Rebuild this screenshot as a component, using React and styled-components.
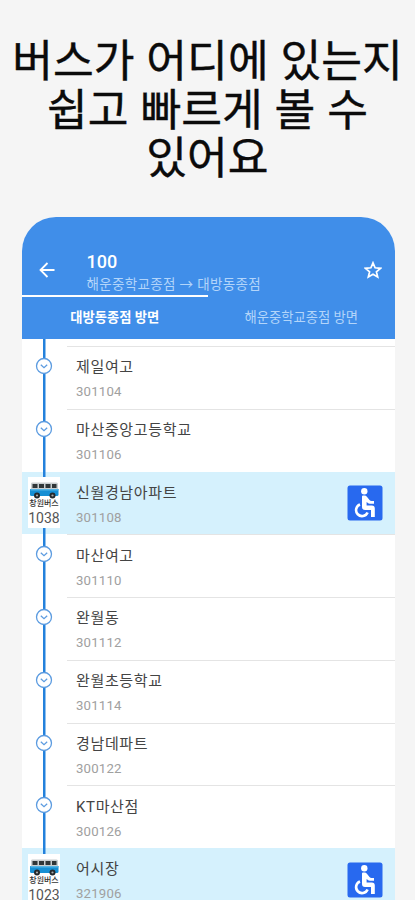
import React from 'react'
import styled, { createGlobalStyle } from "styled-components";

const stops = [
  { name: "제일여고", code: "301104" },
  { name: "마산중앙고등학교", code: "301106" },
  { name: "신월경남아파트", code: "301108", bus: "1038" },
  { name: "마산여고", code: "301110" },
  { name: "완월동", code: "301112" },
  { name: "완월초등학교", code: "301114" },
  { name: "경남데파트", code: "300122" },
  { name: "KT마산점", code: "300126" },
  { name: "어시장", code: "321906", bus: "1023" },
];

const BusPicture = () => (
  <svg width="31" height="18" viewBox="0 0 31 18">
    <path d="M3 1.500h24.500q1.500 0 1.500 1.500V8H2V3q0-1.500 1-1.500z" fill="#c9ced0" />
    <path d="M3.500 3h5v4h-5zM10 3h5v4h-5zM16.500 3h5v4h-5zM23 3h4.500v4H23z" fill="#303638" />
    <path d="M1 8h28.500v5.500q0 1.500-1.500 1.500H2.500Q1 15 1 13.500z" fill="#168fd4" />
    <path d="M1.500 8h28v1.500h-28z" fill="#55b4e5" />
    <circle cx="8" cy="14.500" r="3" fill="#25292b" />
    <circle cx="23.500" cy="14.500" r="3" fill="#25292b" />
    <circle cx="8" cy="14.500" r="1.100" fill="#aaa" />
    <circle cx="23.500" cy="14.500" r="1.100" fill="#aaa" />
  </svg>
);

const Wheelchair = () => (
  <svg width="36" height="36" viewBox="0 0 36 36">
    <rect x="0.500" y="0.500" width="35" height="35" rx="2.500" fill="#2869ef" />
    <circle cx="17.300" cy="6.300" r="3.200" fill="#fff" />
    <path d="M15 11.500q0-1 1-1h1.500q1.500 0 2.400 1.200l2.600 3.300q.8.900 2 .9h2.500v2.800h-4q-1.500 0-2.400-.9L19.600 17v3.500h5.200q3 0 3 3v8.500h-3.800v-7H18q-3 0-3-3z" fill="#fff" />
    <path d="M13 19.500a6 6 0 1 0 7.600 8" fill="none" stroke="#fff" strokeWidth="2.600" />
  </svg>
);

export default function App() {
  return (
    <Page>
      <GlobalStyle />
      <Title>버스가 어디에 있는지<br />쉽고 빠르게 볼 수<br />있어요</Title>
      <Phone>
        <Header>
          <TopBar>
            <svg width="16" height="16" viewBox="0 0 16 16" fill="none" stroke="#fff" strokeWidth="1.800">
              <path d="M15.500 8H2M8.500 1L1.500 8l7 7" />
            </svg>
            <Route>
              <RouteNumber>100</RouteNumber>
              <RoutePath>해운중학교종점 → 대방동종점</RoutePath>
            </Route>
            <svg width="18" height="18" viewBox="0 0 18 18" fill="none" stroke="#fff" strokeWidth="1.700">
              <path d="M9 1.800l2.100 5 5.400.5-4.100 3.500 1.300 5.300L9 13.300l-4.700 2.800 1.300-5.300L1.500 7.300l5.400-.5z" />
            </svg>
          </TopBar>
          <Indicator />
          <Tabs>
            <Tab $active>대방동종점 방면</Tab>
            <Tab>해운중학교종점 방면</Tab>
          </Tabs>
        </Header>
        <List>
          <Gap><Track /></Gap>
          {stops.map((stop) => (
            <Row key={stop.code} $active={stop.bus}>
              <Track>
                {stop.bus ? (
                  <BusTag>
                    <BusPicture />
                    <BusLabel>창원버스</BusLabel>
                    <BusNumber>{stop.bus}</BusNumber>
                  </BusTag>
                ) : (
                  <StopMark width="18" height="18" viewBox="0 0 18 18" fill="none">
                    <circle cx="9" cy="9" r="7.500" fill="#fff" stroke="#5b9be0" strokeWidth="1.300" />
                    <path d="M5.800 7.800L9 10.800l3.200-3" stroke="#5b9be0" strokeWidth="1.200" />
                  </StopMark>
                )}
              </Track>
              <Stop $active={stop.bus}>
                <div>
                  <StopName>{stop.name}</StopName>
                  <StopCode>{stop.code}</StopCode>
                </div>
                {stop.bus && <Wheelchair />}
              </Stop>
            </Row>
          ))}
        </List>
      </Phone>
    </Page>
  );
}

const GlobalStyle = createGlobalStyle`
  body {
    margin: 0;
    background: #f5f5f5;
  }
  * {
    box-sizing: border-box;
  }
`;
const Page = styled.main`
  width: 415px;
  height: 900px;
  padding-top: 34px;
  overflow: hidden;
  background: #f5f5f5;
  font-family: Roboto, "Noto Sans CJK KR", sans-serif;
`;
const Title = styled.h1`
  height: 147px;
  margin: 0;
  font-family: "Noto Sans CJK KR", sans-serif;
  font-size: 44.3px;
  font-weight: 400;
  line-height: 48.700px;
  word-spacing: 2px;
  text-align: center;
  white-space: nowrap;
  color: #0b0b0b;
  -webkit-text-stroke: 0.4px #0b0b0b;
`;
const Phone = styled.section`
  width: 373px;
  margin: 35.500px 0 0 21.500px;
  border-radius: 34px 34px 0 0;
  overflow: hidden;
  background: white;
`;
const Header = styled.header`
  height: 122px;
  background: #408ee9;
`;
const TopBar = styled.div`
  display: flex;
  align-items: center;
  height: 78px;
  padding: 28px 13px 0 17px;
`;
const Route = styled.div`
  flex: 1;
  margin-left: 32px;
  padding-top: 5px;
`;
const RouteNumber = styled.div`
  height: 23px;
  font-size: 18px;
  font-weight: 500;
  line-height: 23px;
  color: white;
`;
const RoutePath = styled.div`
  height: 22px;
  font-size: 13.5px;
  letter-spacing: 0.35px;
  line-height: 22px;
  white-space: nowrap;
  color: #b3d5fa;
`;
const Indicator = styled.div`
  width: 186.500px;
  height: 2.500px;
  background: white;
`;
const Tabs = styled.nav`
  display: flex;
  height: 41px;
`;
const Tab = styled.div`
  flex: 1;
  font-size: 13.3px;
  font-weight: ${(props) => (props.$active ? 700 : 400)};
  line-height: 42px;
  text-align: center;
  color: ${(props) => (props.$active ? "white" : "#b3d5fa")};
`;
const List = styled.div`
  display: flex;
  flex-direction: column;
`;
const Gap = styled.div`
  display: flex;
  height: 7.500px;
`;
const Row = styled.div`
  display: flex;
  height: 62.750px;
  background: ${(props) => (props.$active ? "#d5f1fd" : "white")};
`;
const Track = styled.div`
  display: flex;
  flex-direction: column;
  align-items: center;
  width: 45px;
  background: linear-gradient(#2381dc, #2381dc) 21px 0 / 2.500px 100% no-repeat;
`;
const StopMark = styled.svg`
  margin-top: 11px;
`;
const BusTag = styled.div`
  display: flex;
  flex-direction: column;
  align-items: center;
  width: 32px;
  height: 51px;
  margin-top: 5.500px;
  padding-top: 4px;
  background: white;
`;
const BusLabel = styled.div`
  height: 10px;
  font-size: 8px;
  font-weight: 500;
  line-height: 10px;
  white-space: nowrap;
  color: #333;
`;
const BusNumber = styled.div`
  margin-top: 1px;
  font-size: 14px;
  line-height: 17px;
  color: #555;
`;
const Stop = styled.div`
  display: flex;
  flex: 1;
  align-items: center;
  justify-content: space-between;
  padding: 0 12px 0 9.500px;
  border-top: 1px solid ${(props) => (props.$active ? "#d5f1fd" : "#e4e4e4")};
`;
const StopName = styled.div`
  height: 27px;
  font-size: 15px;
  letter-spacing: 0.65px;
  line-height: 31px;
  color: #444;
`;
const StopCode = styled.div`
  height: 24px;
  font-size: 13.2px;
  line-height: 26px;
  letter-spacing: 0.2px;
  color: #a0a0a0;
`;
